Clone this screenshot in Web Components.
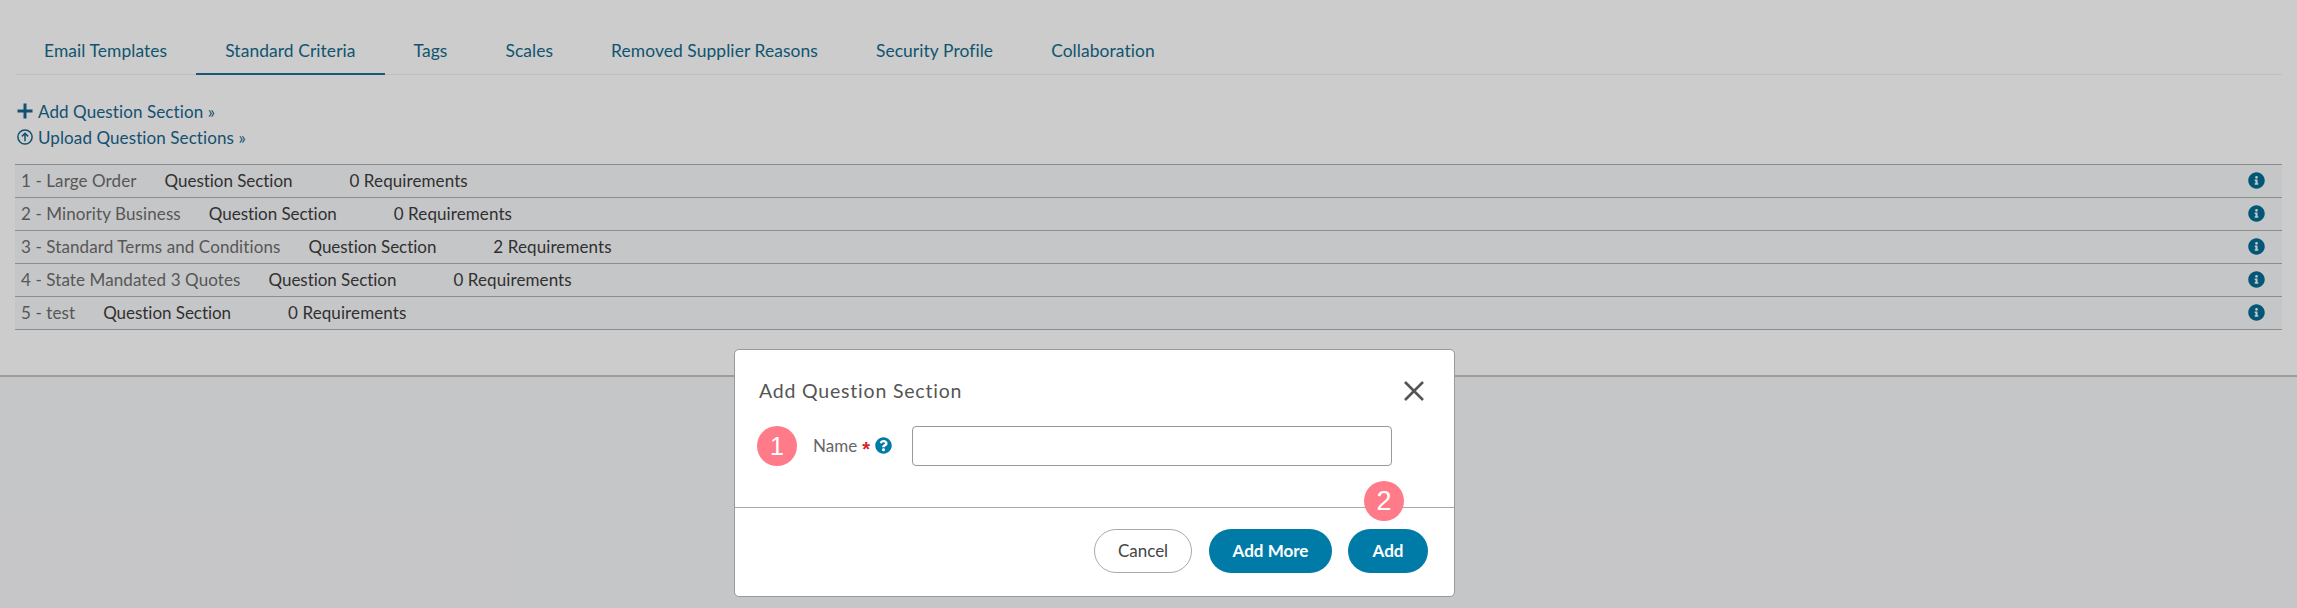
<!DOCTYPE html>
<html lang="en"><head><meta charset="utf-8"><title>Standard Criteria</title>
<style>
html,body{margin:0;padding:0;height:608px;overflow:hidden;background:#f7f8fa;font-family:"Lato","Noto Sans",sans-serif}
</style></head><body>
<app-page>
  <tab-bar>
    <tab-item>Email Templates</tab-item>
    <tab-item active>Standard Criteria</tab-item>
    <tab-item>Tags</tab-item>
    <tab-item>Scales</tab-item>
    <tab-item>Removed Supplier Reasons</tab-item>
    <tab-item>Security Profile</tab-item>
    <tab-item>Collaboration</tab-item>
  </tab-bar>
  <action-links></action-links>
  <section-list>
    <section-row label="1 - Large Order" req="0 Requirements"></section-row>
    <section-row label="2 - Minority Business" req="0 Requirements"></section-row>
    <section-row label="3 - Standard Terms and Conditions" req="2 Requirements"></section-row>
    <section-row label="4 - State Mandated 3 Quotes" req="0 Requirements"></section-row>
    <section-row label="5 - test" req="0 Requirements"></section-row>
  </section-list>
</app-page>
<modal-overlay></modal-overlay>
<script>
const INFO='M256 8C119.043 8 8 119.083 8 256c0 136.997 111.043 248 248 248s248-111.003 248-248C504 119.083 392.957 8 256 8zm0 110c23.196 0 42 18.804 42 42s-18.804 42-42 42-42-18.804-42-42 18.804-42 42-42zm56 254c0 6.627-5.373 12-12 12h-88c-6.627 0-12-5.373-12-12v-24c0-6.627 5.373-12 12-12h12v-64h-12c-6.627 0-12-5.373-12-12v-24c0-6.627 5.373-12 12-12h64c6.627 0 12 5.373 12 12v100h12c6.627 0 12 5.373 12 12v24z';
const HELP='M504 256c0 136.997-111.043 248-248 248S8 392.997 8 256C8 119.083 119.043 8 256 8s248 111.083 248 248zM262.655 90c-54.497 0-89.255 22.957-116.549 63.758-3.536 5.286-2.353 12.415 2.715 16.258l34.699 26.31c5.205 3.947 12.621 3.008 16.665-2.122 17.864-22.658 30.113-35.797 57.303-35.797 20.429 0 45.698 13.148 45.698 32.958 0 14.976-12.363 22.667-32.534 33.976C247.128 238.528 216 254.941 216 296v4c0 6.627 5.373 12 12 12h56c6.627 0 12-5.373 12-12v-1.333c0-28.462 83.186-29.647 83.186-106.667 0-58.002-60.165-102-116.531-102zM256 338c-25.365 0-46 20.635-46 46 0 25.364 20.635 46 46 46s46-20.636 46-46c0-25.365-20.635-46-46-46z';
function def(name,html,extra){
  const t=document.createElement('template');t.innerHTML=html;
  customElements.define(name,class extends HTMLElement{
    constructor(){super();this.attachShadow({mode:'open'}).appendChild(t.content.cloneNode(true));}
    connectedCallback(){extra&&extra(this);}
  });
}
def('app-page',`<style>:host{display:block;background:#fff;border-bottom:2px solid #c4c4c4;padding:26px 15px 0;box-sizing:border-box;height:377px}</style><slot></slot>`);
def('tab-bar',`<style>:host{display:flex;height:49px;border-bottom:1px solid #f0f0f0;box-sizing:border-box}</style><slot></slot>`);
def('tab-item',`<style>
:host{display:block;padding:0 29px;height:49px;box-sizing:border-box;line-height:49px;color:#136b8c;font-size:17.4px;letter-spacing:.09px;white-space:nowrap}
:host([active]){border-bottom:2px solid #1f6f99}
</style><slot></slot>`);
def('action-links',`<style>
:host{display:flex;flex-direction:column;padding:23px 0 0 2px;height:66px;box-sizing:content-box}
.l{display:flex;align-items:center;height:26px;gap:5px;color:#18668e;font-size:17px;letter-spacing:.1px;white-space:nowrap}
svg{width:16px;height:16px;flex:none}
</style>
<div class="l"><svg viewBox="0 0 16 16"><path d="M8 .5v15M.5 8h15" stroke="#18668e" stroke-width="3" fill="none"/></svg>Add Question Section »</div>
<div class="l"><svg viewBox="0 0 16 16" fill="none" stroke="#18668e" stroke-width="1.5"><circle cx="8" cy="8" r="7.1"/><path d="M8 12.2V4.4M4.9 7.4 8 4.3l3.1 3.1"/></svg>Upload Question Sections »</div>`);
def('section-list',`<style>:host{display:block;border-top:1px solid #b0b0b0}</style><slot></slot>`);
def('section-row',`<style>
:host{display:flex;align-items:center;height:33px;box-sizing:border-box;background:#f7f8fa;border-bottom:1px solid #b0b0b0;padding:0 17px 2px 6px;font-size:17px;letter-spacing:.1px;color:#3d3d3d;white-space:nowrap}
#l{color:#6d6d6d;margin-right:28px}
#q{margin-right:57px;letter-spacing:-.04px}
svg{width:17px;height:17px;margin-left:auto;fill:#036d94}
</style><span id="l"></span><span id="q">Question Section</span><span id="r"></span><svg viewBox="0 0 512 512"><path d="${INFO}"/></svg>`,
el=>{el.shadowRoot.getElementById('l').textContent=el.getAttribute('label');el.shadowRoot.getElementById('r').textContent=el.getAttribute('req');});
def('step-badge',`<style>
:host{display:flex;align-items:center;justify-content:center;width:40px;height:40px;border-radius:50%;background:#ff7b89;color:#fff;font:25px "Liberation Sans",sans-serif;flex:none}
</style><slot></slot>`);
def('pill-button',`<style>
:host{display:flex;align-items:center;justify-content:center;height:44px;box-sizing:border-box;border-radius:22px;background:#007ba7;color:#fff;font-size:17px;font-weight:700;padding-bottom:2px;white-space:nowrap}
:host([plain]){background:#fff;border:1px solid #aaa;color:#444;font-weight:400}
</style><slot></slot>`);
def('modal-overlay',`<style>
:host{display:block;position:absolute;inset:0;background:rgba(0,0,0,.2)}
.m{position:absolute;left:734px;top:349px;width:721px;height:248px;box-sizing:border-box;background:#fff;border:1px solid #9a9a9a;border-radius:5px;display:flex;flex-direction:column}
.top{height:158px;box-sizing:border-box;border-bottom:1px solid #a8a8a8;padding:26px 30px 0 24px;flex:none}
.h{display:flex;justify-content:space-between;align-items:center;height:30px;color:#555;font-size:19.5px;letter-spacing:.8px}
.h span{padding-bottom:2px}
.f{display:flex;align-items:center;margin-top:20px;height:40px}
.n{margin-left:16px;color:#666;font-size:17px;width:73px;display:flex;align-items:center;white-space:nowrap;padding-bottom:1px}
.s{color:#d8232a;font:700 20px/20px "Liberation Sans",sans-serif;height:14px;margin:0 5px 0 5px}
.n svg{width:17px;height:17px;fill:#007ba7;flex:none}
.i{margin-left:26px;width:480px;height:40px;box-sizing:border-box;border:1px solid #999;border-radius:4px}
.x{width:20px;height:20px;stroke:#555;stroke-width:2.6;fill:none;flex:none}
.b{display:flex;justify-content:flex-end;align-items:flex-start;padding:21px 26px 0 0}
.b2{position:absolute;left:629px;top:131px;font-size:27px}
</style>
<div class="m">
  <div class="top">
    <div class="h"><span>Add Question Section</span><svg class="x" viewBox="0 0 20 20"><path d="M1 1l18 18M19 1 1 19"/></svg></div>
    <div class="f"><step-badge style="margin-left:-2px">1</step-badge><div class="n">Name<span class="s">*</span><svg viewBox="0 0 512 512"><path d="${HELP}"/></svg></div><div class="i" role="textbox"></div></div>
  </div>
  <div class="b">
    <pill-button plain style="width:98px;margin-right:17px">Cancel</pill-button>
    <pill-button style="width:123px;margin-right:16px">Add More</pill-button>
    <pill-button style="width:80px">Add</pill-button>
  </div>
  <step-badge class="b2">2</step-badge>
</div>`);
</script>
</body></html>
